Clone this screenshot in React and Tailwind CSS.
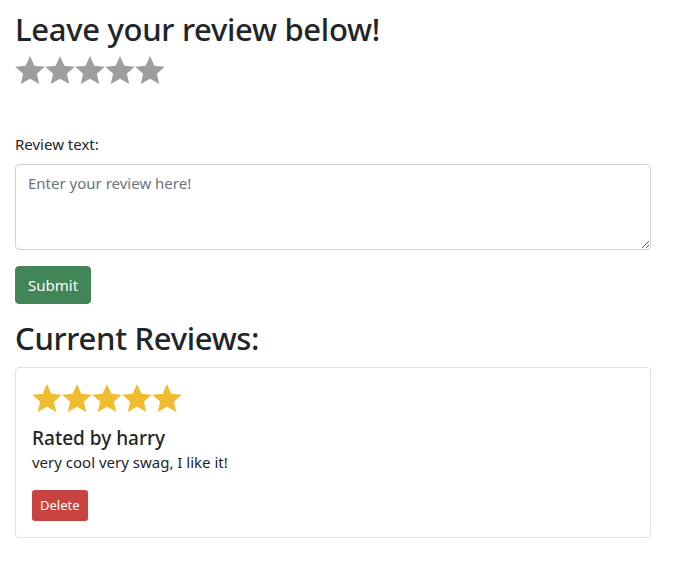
import { useState } from "react";

const Star = ({ color }) => (
  <svg viewBox="1.4 1.6 21.2 20" className="w-[30px] h-[28px]" fill={color}>
    <path d="M12 1.6l3.1 6.9 7.4.7-5.6 5 1.7 7.4L12 17.8 5.4 21.6l1.7-7.4-5.6-5 7.4-.7z" />
  </svg>
);

const App = () => {
  const [text, setText] = useState("");

  return (
    <div
      className="w-[636px] ml-[15px] text-[#212529] bg-white"
      style={{ fontFamily: '"Noto Sans", sans-serif' }}
    >
      <h1 className="text-[31px] leading-[38px] font-medium pt-[10px] tracking-[-0.3px]">
        Leave your review below!
      </h1>
      <div className="flex mt-[8px]">
        {[1, 2, 3, 4, 5].map((i) => (
          <Star key={i} color="#9e9e9e" />
        ))}
      </div>

      <label className="block mt-[48px] text-[15px] leading-[24px]">Review text:</label>
      <textarea
        value={text}
        onChange={(e) => setText(e.target.value)}
        placeholder="Enter your review here!"
        className="block w-full h-[86px] mt-[8px] border border-[#ced4da] rounded-[4px] px-[12px] py-[6px] text-[15px] leading-[24px] placeholder:text-[#6c757d] outline-none"
      />
      <button className="mt-[16px] bg-[#428557] text-white text-[15px] leading-[24px] px-[12px] py-[6px] rounded-[4px] border border-[#428557]">
        Submit
      </button>

      <h2 className="text-[31px] leading-[38px] font-medium mt-[15px] tracking-[-0.3px]">
        Current Reviews:
      </h2>
      <div className="mt-[10px] border border-[#dee2e6] rounded-[4px] px-[16px] pt-[16px] pb-[16px]">
        <div className="flex">
          {[1, 2, 3, 4, 5].map((i) => (
            <Star key={i} color="#f0bc32" />
          ))}
        </div>
        <h5 className="text-[19px] leading-[24px] font-medium mt-[14px]">Rated by harry</h5>
        <p className="text-[15px] leading-[24px]">very cool very swag, I like it!</p>
        <button className="mt-[16px] bg-[#c94440] text-white text-[13px] leading-[21px] px-[8px] py-[5px] rounded-[3px]">
          Delete
        </button>
      </div>
    </div>
  );
};

export default App;
